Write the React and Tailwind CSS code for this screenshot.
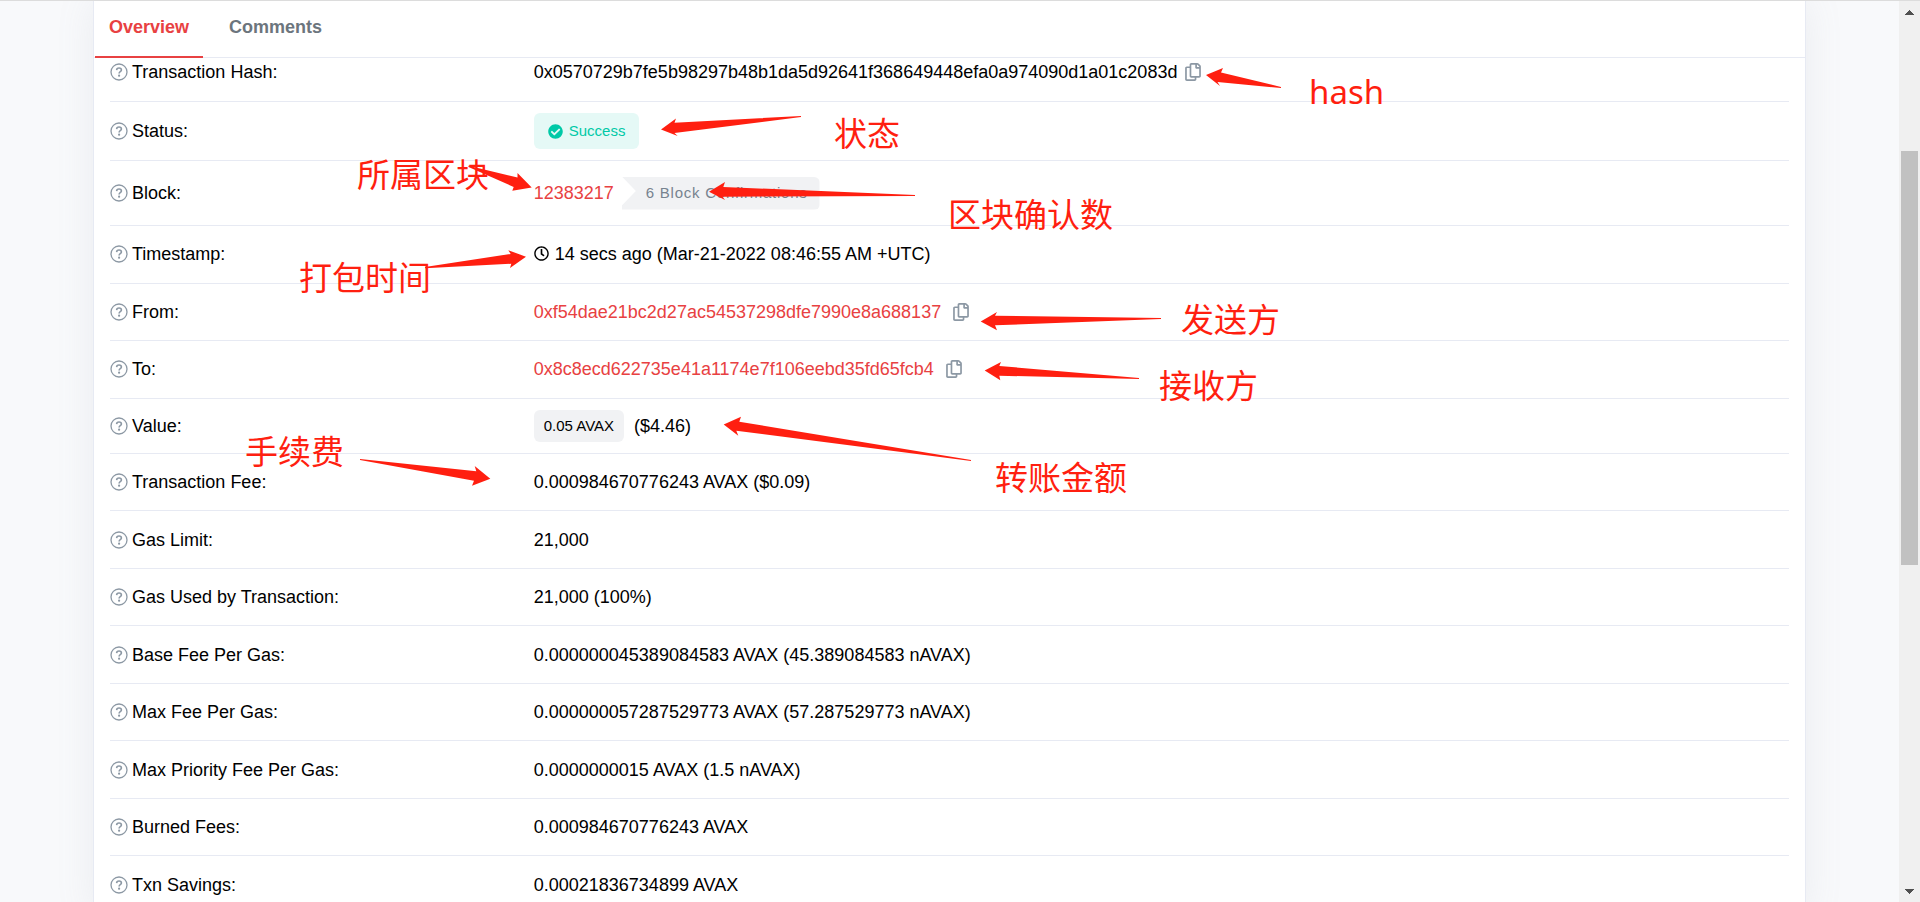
import React from "react";
import { FaRegCopy, FaRegClock, FaCheckCircle } from "react-icons/fa";

function QuestionIcon() {
  return (
    <svg
      viewBox="0 0 18 18"
      className="-mr-px size-[18px] shrink-0 text-[#8c98a4]"
      fill="none"
      stroke="currentColor"
      aria-hidden="true"
    >
      <circle cx="9" cy="9" r="8" strokeWidth="1.3" />
      <path d="M6.6 7.1C6.7 5.7 7.7 5 9 5C10.4 5 11.4 5.8 11.4 7C11.4 8.7 9.1 8.7 9.1 10.4" strokeWidth="1.6" />
      <circle cx="9.1" cy="12.7" r="1.1" fill="currentColor" stroke="none" />
    </svg>
  );
}

function CopyButton({ label }) {
  return (
    <button type="button" aria-label={label} className="ml-2 shrink-0 text-[#8c98a4]">
      <FaRegCopy className="h-[18px] w-4" aria-hidden="true" />
    </button>
  );
}

function Address({ children, label }) {
  return (
    <>
      <a href="#address" className="mr-1 text-[#e84142]">{children}</a>
      <CopyButton label={label} />
    </>
  );
}

const rows = [
  {
    label: "Transaction Hash:",
    size: "h-11 pb-4",
    value: (
      <>
        <span>0x0570729b7fe5b98297b48b1da5d92641f368649448efa0a974090d1a01c2083d</span>
        <CopyButton label="Copy transaction hash" />
      </>
    ),
  },
  {
    label: "Status:",
    size: "h-[59px]",
    value: (
      <span className="flex h-9 items-center gap-1.5 rounded-md bg-[#e5f9f6] px-3.5 text-[15px] text-[#00c9a7]">
        <FaCheckCircle className="size-[15px]" aria-hidden="true" />
        Success
      </span>
    ),
  },
  {
    label: "Block:",
    size: "h-[65px]",
    value: (
      <>
        <a href="#block" className="text-[#e84142]">12383217</a>
        <span className="ml-2 flex h-[33px] items-center rounded-r-md bg-[#f1f2f4] pr-3 pl-6 text-[15px] tracking-wider text-[#77838f] [clip-path:polygon(0_0,100%_0,100%_100%,0_100%,0_88%,14px_44%)]">
          6 Block Confirmations
        </span>
      </>
    ),
  },
  {
    label: "Timestamp:",
    size: "h-[58px] pb-0.5",
    value: (
      <>
        <FaRegClock className="mr-1.5 size-[15px]" aria-hidden="true" />
        <span>14 secs ago (Mar-21-2022 08:46:55 AM +UTC)</span>
      </>
    ),
  },
  {
    label: "From:",
    size: "h-[57px]",
    value: <Address label="Copy sender address">0xf54dae21bc2d27ac54537298dfe7990e8a688137</Address>,
  },
  {
    label: "To:",
    size: "h-[58px] pb-0.5",
    value: <Address label="Copy recipient address">0x8c8ecd622735e41a1174e7f106eebd35fd65fcb4</Address>,
  },
  {
    label: "Value:",
    size: "h-[55px]",
    value: (
      <>
        <span className="mr-2.5 flex h-8 items-center rounded-md bg-[#f1f2f4] px-2.5 text-[15px]">0.05 AVAX</span>
        <span>($4.46)</span>
      </>
    ),
  },
  { label: "Transaction Fee:", size: "h-[57px]", value: "0.000984670776243 AVAX ($0.09)" },
  { label: "Gas Limit:", size: "h-[58px]", value: "21,000" },
  { label: "Gas Used by Transaction:", size: "h-[57px]", value: "21,000 (100%)" },
  { label: "Base Fee Per Gas:", size: "h-[58px]", value: "0.000000045389084583 AVAX (45.389084583 nAVAX)" },
  { label: "Max Fee Per Gas:", size: "h-[57px]", value: "0.000000057287529773 AVAX (57.287529773 nAVAX)" },
  { label: "Max Priority Fee Per Gas:", size: "h-[58px]", value: "0.0000000015 AVAX (1.5 nAVAX)" },
  { label: "Burned Fees:", size: "h-[57px]", value: "0.000984670776243 AVAX" },
  { label: "Txn Savings:", size: "h-[58px]", value: "0.00021836734899 AVAX" },
];

const arrows = [
  "1206,75 1223,68 1221,72.5 1281,87 1281,88 1217.5,82 1220,86",
  "661,129.5 676,118.5 674.5,122.7 801,116 801,117 674.5,133 677.7,136",
  "531.7,187.5 517.5,173 517.5,177.5 468.5,165.7 468.5,167 513.7,187 512.3,190.7",
  "526,256.7 508.3,250.3 510.7,254 425,267 425,268.3 511.3,263.7 510,268",
  "709,191.7 725,182 723.3,187 915,195 915,196 722.5,196.7 725,200",
  "980.7,321.4 997,312 995,315.7 1161,318 1161,319 995,325.3 997,330.3",
  "984.7,370.4 1001,362 999.3,366 1139,378 1139,379 999.3,375.7 1000.3,380.3",
  "723.7,424.4 741,416.7 739.3,421.7 971,460 971,461 736.3,430.7 738.3,435.7",
  "490.3,478.7 474.7,466 476.3,471.3 360,459 360,460 474,480.7 472,485.7",
];

const notes = [
  { text: "hash", place: "left-[1309px] top-[72px]" },
  { text: "状态", place: "left-[834px] top-[114px]" },
  { text: "所属区块", place: "left-[357px] top-[155px]" },
  { text: "区块确认数", place: "left-[948px] top-[195px]" },
  { text: "打包时间", place: "left-[299px] top-[258px]" },
  { text: "发送方", place: "left-[1181px] top-[300px]" },
  { text: "接收方", place: "left-[1159px] top-[366px]" },
  { text: "转账金额", place: "left-[995px] top-[458px]" },
  { text: "手续费", place: "left-[245px] top-[432px]" },
];

function Annotations() {
  return (
    <div className="pointer-events-none absolute inset-0 overflow-hidden text-[#ff1f10]">
      <svg className="absolute inset-0 size-full" fill="currentColor" aria-hidden="true">
        {arrows.map((points) => (
          <polygon key={points} points={points} />
        ))}
      </svg>
      {notes.map((note) => (
        <span
          key={note.text}
          className={
            "absolute whitespace-nowrap font-['Noto_Sans','Noto_Sans_CJK_SC',sans-serif] text-[33px] leading-10 " +
            note.place
          }
        >
          {note.text}
        </span>
      ))}
    </div>
  );
}

function Scrollbar() {
  return (
    <div className="flex w-[21px] shrink-0 flex-col items-center bg-[#f0f0f0] pt-[9px] pb-2" aria-hidden="true">
      <svg width="9" height="5" fill="#505050" shapeRendering="crispEdges">
        <path d="M0 5V4H1V3H2V2H3V1H4V0H5V1H6V2H7V3H8V4H9V5Z" />
      </svg>
      <div className="flex w-full flex-1 flex-col pr-0.5 pl-0.5">
        <div className="h-[15.6%]" />
        <div className="h-[47.3%] bg-[#c1c1c1]" />
      </div>
      <svg width="9" height="5" fill="#505050" shapeRendering="crispEdges">
        <path d="M0 0V1H1V2H2V3H3V4H4V5H5V4H6V3H7V2H8V1H9V0Z" />
      </svg>
    </div>
  );
}

export default function App() {
  return (
    <div className="relative font-['Liberation_Sans',Arial,sans-serif] text-[18px] leading-6 text-black">
      <div className="flex h-screen overflow-hidden border-t border-[#dcdcdc] bg-[#f8f9fb]">
        <main className="mx-[93px] min-w-0 flex-1">
          <section className="min-h-full border-x border-[#e7eaf3] bg-white shadow-[0_0_35px_rgba(140,152,164,0.125)]">
            <nav className="flex h-[57px] gap-3 border-b border-[#e7eaf3] pl-px font-bold">
              <a
                href="#overview"
                aria-current="page"
                className="-mb-px flex items-center border-b-2 border-[#e84142] px-3.5 pb-3 pt-2 text-[#e84142]"
              >
                Overview
              </a>
              <a href="#comments" className="-mb-px flex items-center border-b-2 border-transparent px-3.5 pb-3 pt-2 text-[#6c757d]">
                Comments
              </a>
            </nav>
            <dl className="px-4">
              {rows.map((row) => (
                <div key={row.label} className={"flex items-center border-b border-[#e7eaf3] " + row.size}>
                  <dt className="flex w-1/4 shrink-0 items-center gap-[5px]">
                    <QuestionIcon />
                    {row.label}
                  </dt>
                  <dd className="flex min-w-0 flex-1 items-center pl-1 whitespace-nowrap">{row.value}</dd>
                </div>
              ))}
            </dl>
          </section>
        </main>
        <Scrollbar />
      </div>
      <Annotations />
    </div>
  );
}
